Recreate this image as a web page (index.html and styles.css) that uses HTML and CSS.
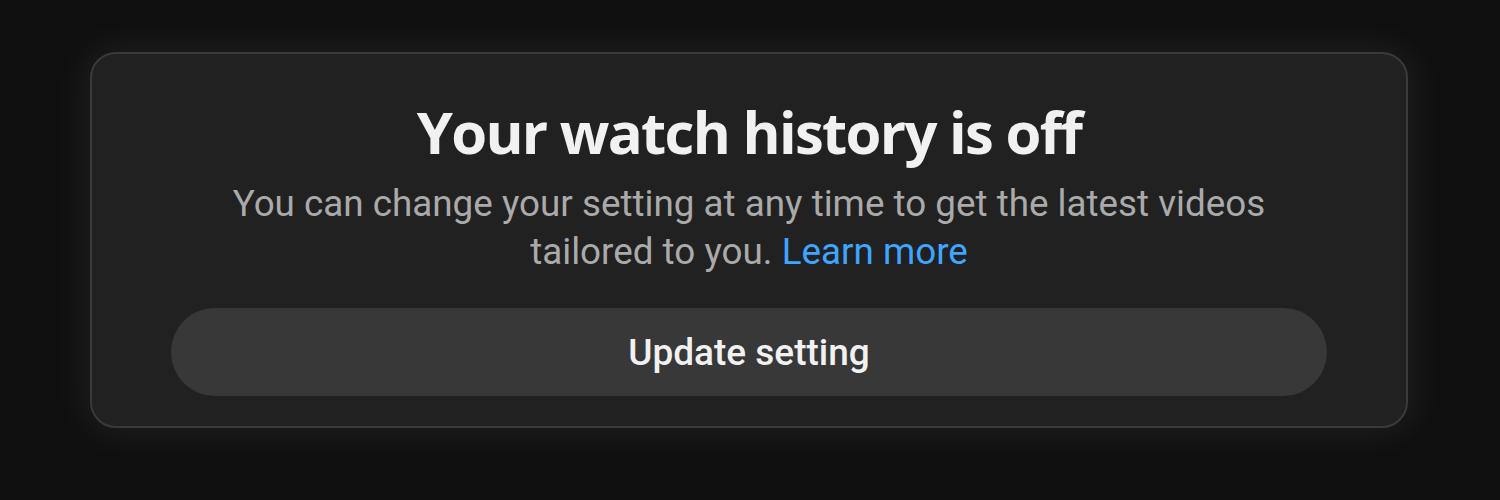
FILE: index.html
```html
<!DOCTYPE html>
<html lang="en">
<head>
    <meta charset="UTF-8">
    <meta name="viewport" content="width=device-width, initial-scale=1.0">
    <title>Watch history</title>
    <link rel="stylesheet" href="styles.css">
</head>
<body>
    <section class="history-card">
        <h1>Your watch history is off</h1>
        <p class="info">
            You can change your setting at any time to get the latest videos<br>
            tailored to you. <a href="#">Learn more</a>
        </p>
        <button class="update-btn">Update setting</button>
    </section>
</body>
</html>
```

FILE: styles.css
```css
* {
    box-sizing: border-box;
}

body {
    margin: 0;
    padding: 52px 92px 0 90px;
    height: 500px;
    background: #0f0f0f;
    font-family: Roboto, 'Liberation Sans', sans-serif;
    overflow: hidden;
}

.history-card {
    height: 376px;
    background: #212121;
    border: 2px solid #3a3a3a;
    border-radius: 26px;
    box-shadow: 0 0 40px 6px rgba(255, 255, 255, 0.07);
    padding: 0 79px;
    text-align: center;
}

.history-card h1 {
    font-family: 'Open Sans', sans-serif;
    font-weight: 700;
    font-size: 58px;
    line-height: 64px;
    color: #f1f1f1;
    margin: 0;
    padding-top: 46px;
    letter-spacing: -1.7px;
}

.info {
    margin: 16px 0 0;
    font-size: 36.8px;
    line-height: 48px;
    color: #aaaaaa;
}

.info a {
    color: #3ea6ff;
    text-decoration: none;
}

.update-btn {
    display: block;
    width: 100%;
    height: 88px;
    margin-top: 32px;
    border: none;
    border-radius: 44px;
    background: #383838;
    color: #f1f1f1;
    font-family: Roboto, sans-serif;
    font-weight: 500;
    font-size: 37px;
    cursor: pointer;
}
```
